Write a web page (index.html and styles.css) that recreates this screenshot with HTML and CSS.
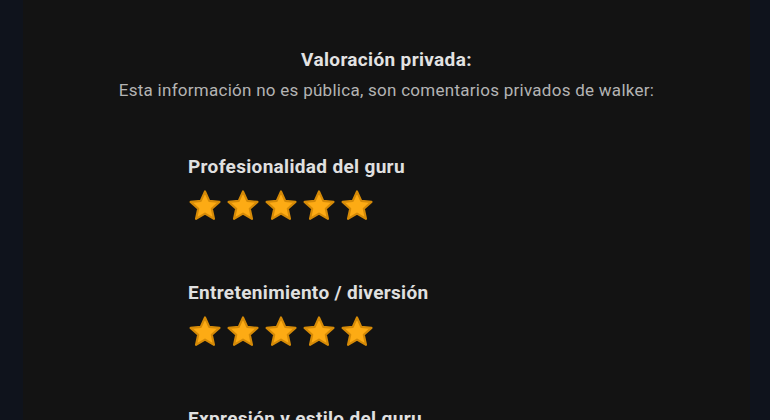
FILE: index.html
```html
<html>
<head>
    <link rel="stylesheet" href="styles.css">
</head>

<body>
    <svg width="0" height="0" class="defs">
        <defs>
            <path id="star" d="M12 2.6l2.75 6.05 6.6.7-4.95 4.45 1.4 6.5L12 16.95 6.2 20.3l1.4-6.5-4.95-4.45 6.6-.7z" />
        </defs>
    </svg>

    <div class="card">
        <!-- Header -->
        <div class="intro">
            <h2>Valoración privada:</h2>
            <p>Esta información no es pública, son comentarios privados de walker:</p>
        </div>

        <!-- Ratings -->
        <div class="ratings">
            <div class="rating">
                <h3>Profesionalidad del guru</h3>
                <div class="stars">
                    <svg viewBox="1 1 22 22"><use href="#star" /></svg>
                    <svg viewBox="1 1 22 22"><use href="#star" /></svg>
                    <svg viewBox="1 1 22 22"><use href="#star" /></svg>
                    <svg viewBox="1 1 22 22"><use href="#star" /></svg>
                    <svg viewBox="1 1 22 22"><use href="#star" /></svg>
                </div>
            </div>

            <div class="rating">
                <h3>Entretenimiento / diversión</h3>
                <div class="stars">
                    <svg viewBox="1 1 22 22"><use href="#star" /></svg>
                    <svg viewBox="1 1 22 22"><use href="#star" /></svg>
                    <svg viewBox="1 1 22 22"><use href="#star" /></svg>
                    <svg viewBox="1 1 22 22"><use href="#star" /></svg>
                    <svg viewBox="1 1 22 22"><use href="#star" /></svg>
                </div>
            </div>

            <div class="rating">
                <h3>Expresión y estilo del guru</h3>
                <div class="stars">
                    <svg viewBox="1 1 22 22"><use href="#star" /></svg>
                    <svg viewBox="1 1 22 22"><use href="#star" /></svg>
                    <svg viewBox="1 1 22 22"><use href="#star" /></svg>
                    <svg viewBox="1 1 22 22"><use href="#star" /></svg>
                    <svg viewBox="1 1 22 22"><use href="#star" /></svg>
                </div>
            </div>
        </div>
    </div>
</body>
</html>
```

FILE: styles.css
```css
body {
    font-family: Roboto, "Liberation Sans", sans-serif;
    background-color: #0f131c;
    margin: 0;
    height: 420px;
    overflow: hidden;
}

.defs {
    position: absolute;
}

.card {
    margin: 0 20px 0 23px;
    min-height: 420px;
    background-color: #131313;
    padding-top: 49px;
}

.intro {
    text-align: center;
}

.intro h2 {
    margin: 0;
    font-size: 19px;
    line-height: 22px;
    letter-spacing: 0.34px;
    font-weight: bold;
    color: #e2e2e2;
}

.intro p {
    margin: 9px 0 0;
    font-size: 17px;
    line-height: 20px;
    letter-spacing: 0.27px;
    color: #b4b4b4;
}

.ratings {
    padding-left: 165px;
    margin-top: 56px;
}

.rating {
    margin-bottom: 59px;
}

.rating h3 {
    margin: 0;
    font-size: 19px;
    line-height: 22px;
    letter-spacing: 0.33px;
    font-weight: bold;
    color: #e0e0e0;
}

.stars {
    display: flex;
    gap: 4px;
    margin-top: 11px;
}

.stars svg {
    width: 34px;
    height: 34px;
    fill: #fdab14;
    stroke: #d58a07;
    stroke-width: 1.4;
    stroke-linejoin: round;
}
```
